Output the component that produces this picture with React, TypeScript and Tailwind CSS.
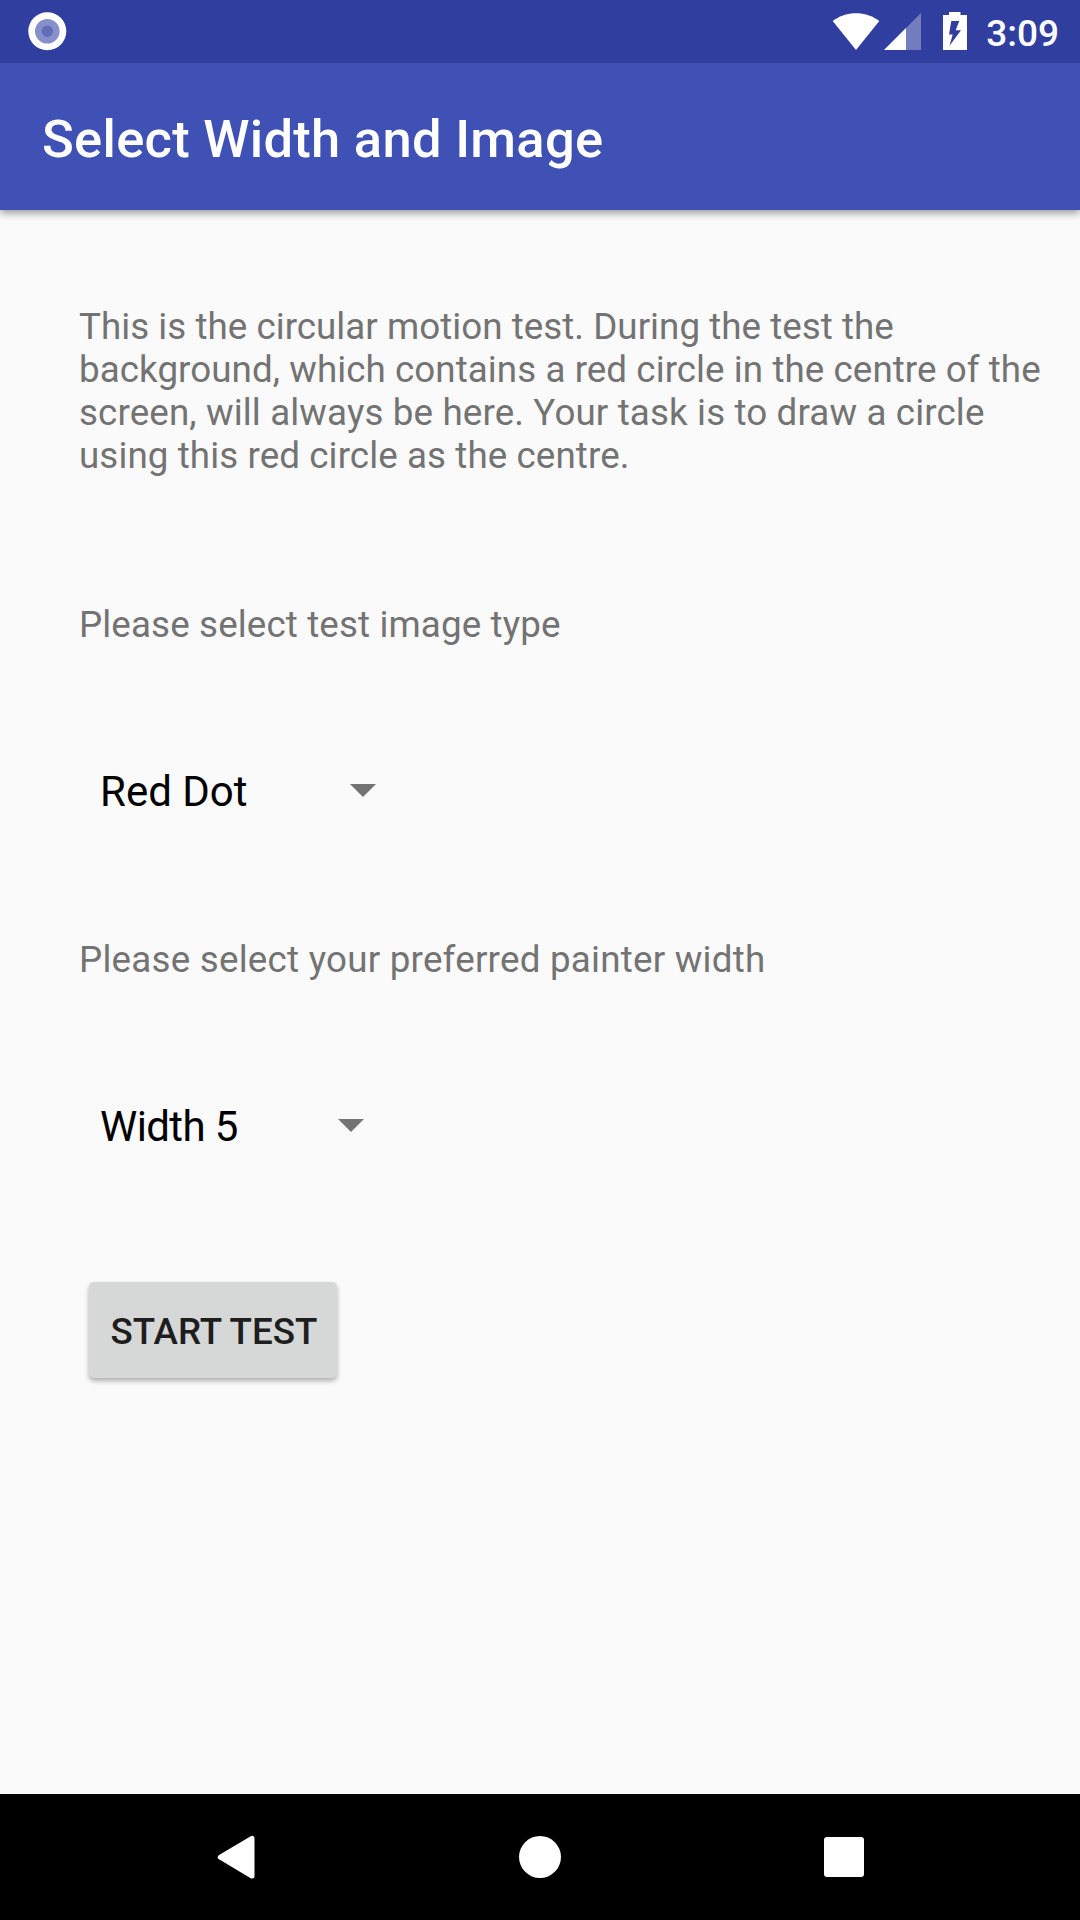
export default function App() {
  return (
    <div className="flex h-[1920px] w-[1080px] flex-col overflow-hidden bg-[#fafafa] font-['Roboto',sans-serif]">
      <div className="relative z-10 flex h-[63px] items-center bg-[#303f9f] pr-[21px] pl-[27px] text-white">
        <svg width="40" height="63" viewBox="0 0 40 63"><circle cx="20.3" cy="31.3" r="19" fill="#fff"/><circle cx="20.3" cy="31.3" r="12.3" fill="#8790ca"/><circle cx="20.3" cy="31.3" r="5.7" fill="#626db9"/></svg>
        <svg className="ml-auto" width="136" height="63" viewBox="832 0 136 63" fill="#fff">
          <path d="M832.7 21C846 10.5 866 10.5 879.3 21L856 50Z"/>
          <path d="M921 13V50H884Z" fillOpacity=".33"/><path d="M906 28V50H884Z"/>
          <path fillRule="evenodd" d="M949 12H960.5V15H967V50H943V15H949ZM951.3 21H959.3L955.7 30.3H961L949.5 45.7L952.7 34.5H949Z"/>
        </svg>
        <span className="mt-[4px] ml-[18px] text-[37px] leading-[44px] font-medium">3:09</span>
      </div>
      <header className="flex h-[147px] items-center bg-[#3f51b5] pt-[5px] pl-[42px] shadow-[0_3px_8px_rgba(0,0,0,0.4)]">
        <h1 className="text-[52.5px] font-medium tracking-[0.28px] whitespace-nowrap text-white">Select Width and Image</h1>
      </header>
      <main className="flex flex-1 flex-col items-start pt-[95px] pl-[79px]">
        <p className="text-[36.75px] leading-[43px] whitespace-nowrap text-[#737373]">
          <span className="block tracking-[0.03px]">This is the circular motion test. During the test the</span>
          <span className="block tracking-[0.065px]">background, which contains a red circle in the centre of the</span>
          <span className="block tracking-[0.13px]">screen, will always be here. Your task is to draw a circle</span>
          <span className="block tracking-[0.09px]">using this red circle as the centre.</span>
        </p>
        <p className="mt-[126px] text-[36.75px] leading-[43px] tracking-[0.125px] text-[#737373]">Please select test image type</p>
        <button className="mt-[120px] flex h-[50px] w-[297px] items-center justify-between pl-[21px] text-[42px] text-black">Red Dot<svg className="mb-[2px]" width="26" height="13" viewBox="0 0 26 13"><path d="M0 0H26L13 13Z" fill="#737373"/></svg></button>
        <p className="mt-[122px] text-[36.75px] leading-[43px] tracking-[0.23px] text-[#737373]">Please select your preferred painter width</p>
        <button className="mt-[120px] flex h-[50px] w-[285px] items-center justify-between pl-[21px] text-[42px] text-black"><span className="tracking-[-0.6px]">Width 5</span><svg className="mb-[2px]" width="26" height="13" viewBox="0 0 26 13"><path d="M0 0H26L13 13Z" fill="#737373"/></svg></button>
        <button className="mt-[131px] ml-[10px] h-[96px] w-[248px] rounded-[5px] bg-[#d6d7d7] pt-[4px] pl-[2px] text-[36.75px] font-medium text-[#1e1e1e] shadow-[0_3px_5px_rgba(0,0,0,0.3)]">START TEST</button>
      </main>
      <nav className="flex h-[126px] items-center bg-black">
        <svg width="1080" height="126" viewBox="0 0 1080 126" fill="#fff"><path d="M220.3 63.2L252 44.4V82Z" stroke="#fff" strokeWidth="5" strokeLinejoin="round"/><circle cx="540" cy="63" r="21"/><rect x="824" y="43" width="40" height="40" rx="3"/></svg>
      </nav>
    </div>
  );
}
